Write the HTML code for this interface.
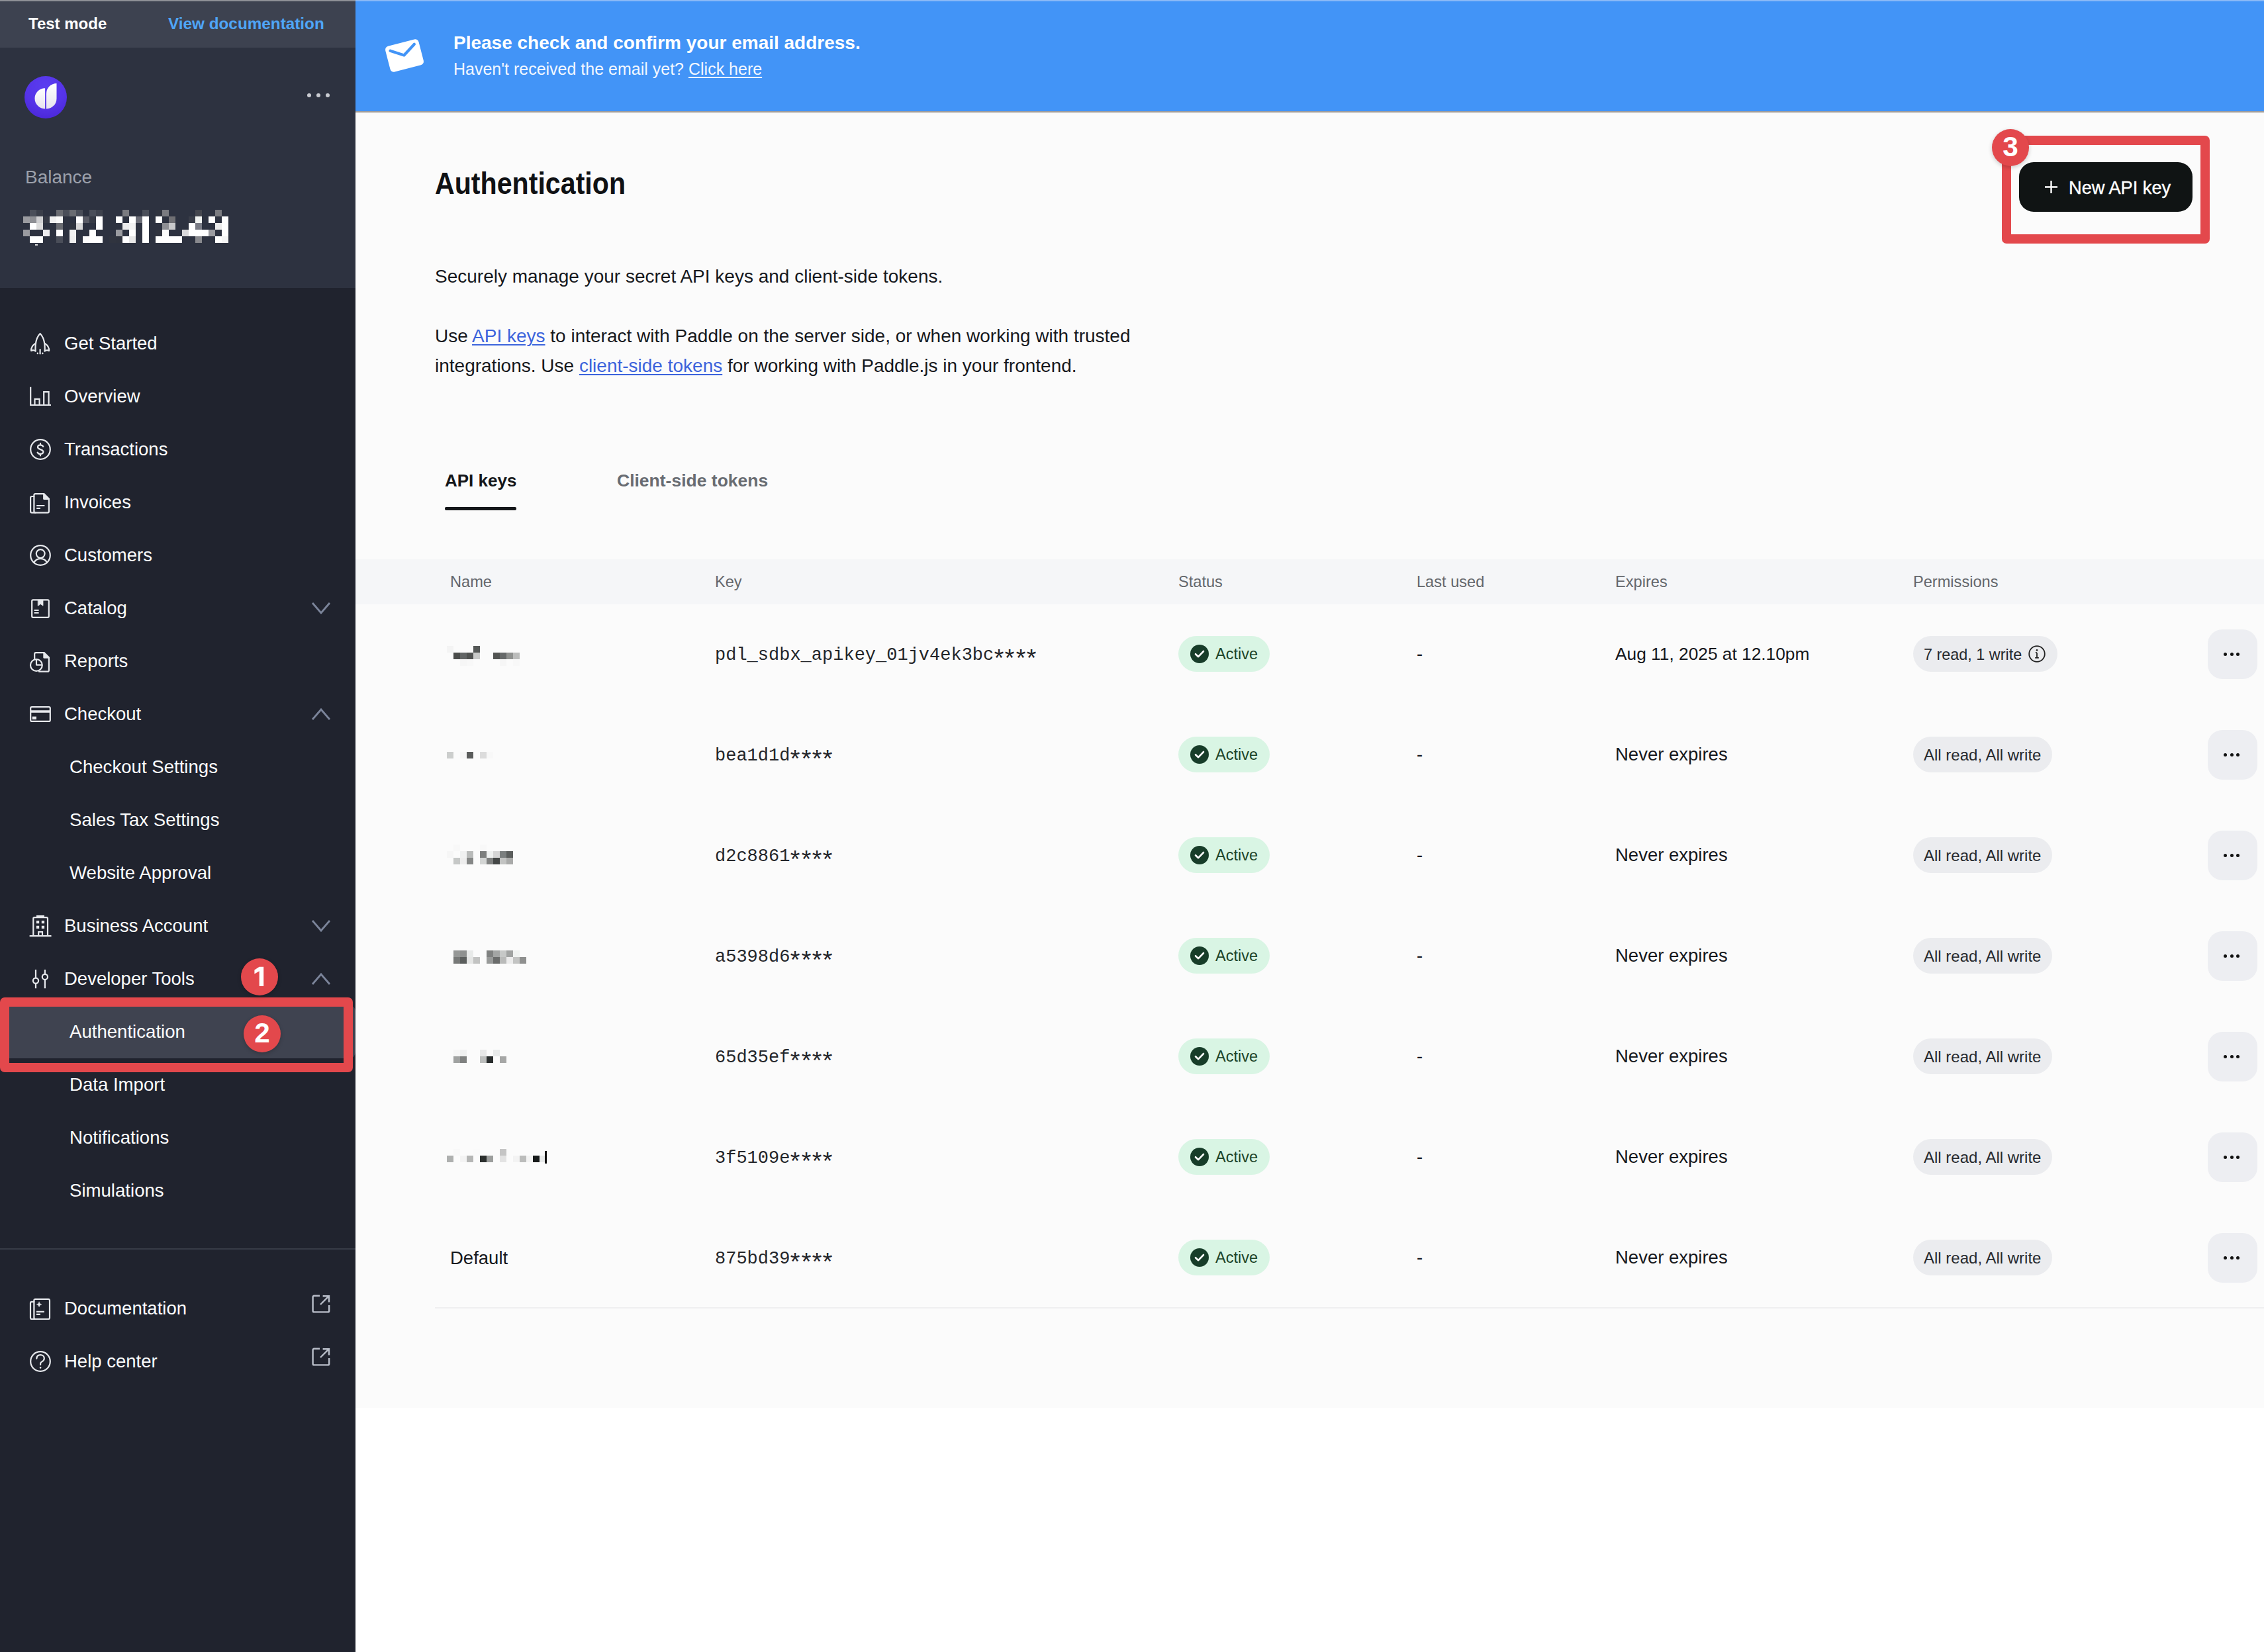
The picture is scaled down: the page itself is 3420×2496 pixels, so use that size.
<!DOCTYPE html>
<html><head><meta charset="utf-8">
<style>
*{box-sizing:border-box;margin:0;padding:0}
html,body{width:3420px;height:2496px;overflow:hidden;background:#fff}
body{position:relative;font-family:"Liberation Sans",sans-serif}
.a{position:absolute;white-space:nowrap}
#side{position:absolute;left:0;top:0;width:537px;height:2496px;background:#20232e}
#topbar{position:absolute;left:0;top:0;width:537px;height:72px;background:#3d4250}
#bal{position:absolute;left:0;top:72px;width:537px;height:363px;background:#2d3240}
.nav{position:absolute;left:0;width:537px;height:80px;line-height:80px;font-size:27.5px;color:#fbfcfd}
.nav.sel{background:#3f4350;border-radius:0 9px 9px 0}
.nav .t{position:absolute;left:97px;top:0}
.nav .st{position:absolute;left:105px;top:0;font-size:27.6px}
.nav svg.ic{position:absolute;left:45px;top:24px;width:32px;height:32px;overflow:visible}
.nav svg.ch{position:absolute;left:469px;top:28px;width:32px;height:24px}
.nav svg.ext{position:absolute;left:471px;top:19px;width:28px;height:28px}
#main{position:absolute;left:537px;top:0;width:2883px;height:2127px;background:#fbfbfb}
#banner{position:absolute;left:0;top:0;width:2883px;height:168px;background:#4294f7}
.lk{color:#3b63dc;text-decoration:underline;text-underline-offset:3px;text-decoration-thickness:2px}
.th{line-height:58px;font-size:23.6px;color:#64676c;top:850px}
.rt{line-height:80px;font-size:27.5px;color:#16181d}
.mono{font-family:"Liberation Mono",monospace;font-size:27px;line-height:80px;color:#24262a}
.badge{height:54px;border-radius:27px;background:#d9f5e4}
.perm{height:54px;border-radius:27px;background:#ebecef}
.dots{width:75px;height:75px;border-radius:22px;background:#edeef2}
.dots i{position:absolute;top:35px;width:5px;height:5px;border-radius:50%;background:#111}
.rbox{border:14px solid #e3484c;border-radius:7px}
.circ{width:56px;height:56px;border-radius:50%;background:#e3484c;color:#fff;font-weight:bold;font-size:42.3px;line-height:54px;text-align:center;box-shadow:0 2px 6px rgba(0,0,0,0.2)}
.ast{display:inline-block;width:16.2px;font-style:normal;text-align:center;transform:translateY(8.5px) scale(1.4,1.4)}

</style></head><body>
<div id="side">
<div id="topbar"><span class="a" style="left:43px;top:0;line-height:72px;font-size:24px;font-weight:bold;color:#fff">Test mode</span>
<span class="a" style="left:254px;top:0;line-height:72px;font-size:24.3px;font-weight:bold;color:#4fa5f7">View documentation</span></div>
<div class="a" style="left:0;top:0;width:537px;height:2px;background:#8e9096"></div>
<div id="bal">
</div>
<svg class="a" style="left:37px;top:115px" width="64" height="64" viewBox="0 0 64 64">
<defs><radialGradient id="lg" cx="0.5" cy="0.25" r="0.8"><stop offset="0" stop-color="#5a3df0"/><stop offset="0.6" stop-color="#5533e8"/><stop offset="1" stop-color="#4a26d8"/></radialGradient>
<linearGradient id="wg" x1="0" y1="0" x2="0" y2="1"><stop offset="0" stop-color="#ffffff"/><stop offset="1" stop-color="#e6e4ee"/></linearGradient></defs>
<circle cx="32" cy="32" r="32" fill="url(#lg)"/>
<path d="M31.1 18.2V49.4A15.6 15.6 0 0 1 31.1 18.2Z" fill="url(#wg)"/>
<path d="M33 49.4V26.4A15.5 15.5 0 0 1 48.5 10.9V33.9A15.5 15.5 0 0 1 33 49.4Z" fill="url(#wg)"/>
</svg>
<div class="a" style="left:464px;top:141px;width:6px;height:6px;border-radius:3px;background:#c9cbd1"></div>
<div class="a" style="left:478px;top:141px;width:6px;height:6px;border-radius:3px;background:#c9cbd1"></div>
<div class="a" style="left:492px;top:141px;width:6px;height:6px;border-radius:3px;background:#c9cbd1"></div>
<span class="a" style="left:38px;top:238px;line-height:60px;font-size:28px;color:#9ca1ac">Balance</span>
<svg class="a" style="left:35px;top:317px" width="310" height="55" shape-rendering="crispEdges"><rect x="10" y="0" width="10" height="10" fill="#4a4e59"/><rect x="20" y="0" width="10" height="10" fill="#3a3e49"/><rect x="50" y="0" width="10" height="10" fill="#6a6c72"/><rect x="60" y="0" width="10" height="10" fill="#4a4e59"/><rect x="70" y="0" width="10" height="10" fill="#6a6c72"/><rect x="80" y="0" width="10" height="10" fill="#4a4e59"/><rect x="100" y="0" width="10" height="10" fill="#4a4e59"/><rect x="110" y="0" width="10" height="10" fill="#3e424d"/><rect x="150" y="0" width="10" height="10" fill="#7a7b80"/><rect x="180" y="0" width="10" height="10" fill="#4a4e59"/><rect x="200" y="0" width="10" height="10" fill="#30343f"/><rect x="210" y="0" width="10" height="10" fill="#7a7b80"/><rect x="260" y="0" width="10" height="10" fill="#45474f"/><rect x="290" y="0" width="10" height="10" fill="#7a7b80"/><rect x="0" y="10" width="10" height="10" fill="#9a9ba0"/><rect x="10" y="10" width="10" height="10" fill="#8e8f94"/><rect x="20" y="10" width="10" height="10" fill="#d0d0d2"/><rect x="30" y="10" width="10" height="10" fill="#363a45"/><rect x="40" y="10" width="10" height="10" fill="#f0f0f0"/><rect x="50" y="10" width="10" height="10" fill="#fafafa"/><rect x="80" y="10" width="10" height="10" fill="#ffffff"/><rect x="90" y="10" width="10" height="10" fill="#5a5c66"/><rect x="100" y="10" width="10" height="10" fill="#363a45"/><rect x="110" y="10" width="10" height="10" fill="#ffffff"/><rect x="140" y="10" width="10" height="10" fill="#ffffff"/><rect x="160" y="10" width="10" height="10" fill="#ffffff"/><rect x="170" y="10" width="10" height="10" fill="#6a6c76"/><rect x="180" y="10" width="10" height="10" fill="#ffffff"/><rect x="200" y="10" width="10" height="10" fill="#ffffff"/><rect x="220" y="10" width="10" height="10" fill="#707074"/><rect x="250" y="10" width="10" height="10" fill="#3a3e49"/><rect x="260" y="10" width="10" height="10" fill="#f2f4f2"/><rect x="280" y="10" width="10" height="10" fill="#ffffff"/><rect x="300" y="10" width="10" height="10" fill="#ffffff"/><rect x="10" y="20" width="10" height="10" fill="#ffffff"/><rect x="20" y="20" width="10" height="10" fill="#dcdcdc"/><rect x="50" y="20" width="10" height="10" fill="#6a6c72"/><rect x="70" y="20" width="10" height="10" fill="#30343f"/><rect x="80" y="20" width="10" height="10" fill="#d8d8d8"/><rect x="110" y="20" width="10" height="10" fill="#ffffff"/><rect x="150" y="20" width="10" height="10" fill="#ebebeb"/><rect x="160" y="20" width="10" height="10" fill="#f2f2f2"/><rect x="180" y="20" width="10" height="10" fill="#ffffff"/><rect x="210" y="20" width="10" height="10" fill="#8e8f94"/><rect x="220" y="20" width="10" height="10" fill="#c8c8ca"/><rect x="250" y="20" width="10" height="10" fill="#ffffff"/><rect x="260" y="20" width="10" height="10" fill="#7a7c86"/><rect x="290" y="20" width="10" height="10" fill="#ebebeb"/><rect x="300" y="20" width="10" height="10" fill="#ffffff"/><rect x="0" y="30" width="10" height="10" fill="#9a9ba0"/><rect x="30" y="30" width="10" height="10" fill="#ececee"/><rect x="50" y="30" width="10" height="10" fill="#ffffff"/><rect x="70" y="30" width="10" height="10" fill="#f2f2f2"/><rect x="100" y="30" width="10" height="10" fill="#ffffff"/><rect x="140" y="30" width="10" height="10" fill="#9a9ba0"/><rect x="160" y="30" width="10" height="10" fill="#ffffff"/><rect x="180" y="30" width="10" height="10" fill="#ffffff"/><rect x="200" y="30" width="10" height="10" fill="#30343f"/><rect x="210" y="30" width="10" height="10" fill="#fcfcfc"/><rect x="240" y="30" width="10" height="10" fill="#d8d8da"/><rect x="250" y="30" width="10" height="10" fill="#ffffff"/><rect x="260" y="30" width="10" height="10" fill="#ffffff"/><rect x="270" y="30" width="10" height="10" fill="#ffffff"/><rect x="280" y="30" width="10" height="10" fill="#9a9ba0"/><rect x="300" y="30" width="10" height="10" fill="#ffffff"/><rect x="10" y="40" width="10" height="10" fill="#ffffff"/><rect x="20" y="40" width="10" height="10" fill="#ffffff"/><rect x="50" y="40" width="10" height="10" fill="#4a4e59"/><rect x="70" y="40" width="10" height="10" fill="#efefef"/><rect x="90" y="40" width="10" height="10" fill="#fcfcfc"/><rect x="100" y="40" width="10" height="10" fill="#ffffff"/><rect x="110" y="40" width="10" height="10" fill="#ffffff"/><rect x="130" y="40" width="10" height="10" fill="#30343f"/><rect x="140" y="40" width="10" height="10" fill="#2f333e"/><rect x="150" y="40" width="10" height="10" fill="#ffffff"/><rect x="160" y="40" width="10" height="10" fill="#e8e8e8"/><rect x="180" y="40" width="10" height="10" fill="#ffffff"/><rect x="200" y="40" width="10" height="10" fill="#ffffff"/><rect x="210" y="40" width="10" height="10" fill="#ffffff"/><rect x="220" y="40" width="10" height="10" fill="#ffffff"/><rect x="230" y="40" width="10" height="10" fill="#ffffff"/><rect x="260" y="40" width="10" height="10" fill="#88898e"/><rect x="290" y="40" width="10" height="10" fill="#ffffff"/><rect x="300" y="40" width="10" height="10" fill="#f5f5f5"/><rect x="18" y="52" width="4" height="2" fill="#ddd"/></svg>
<div class="nav" style="top:479px"><svg class="ic" viewBox="0 0 32 32" fill="none" stroke="#e6e8ec" stroke-width="2.2" stroke-linecap="round" stroke-linejoin="round"><path d="M8.6 27.4C7.8 14 10.6 6 15.6 1C20.6 6 23.4 14 22.6 27.4"/><path d="M8.4 15.8C4.2 18.6 1.8 22.8 2.1 27C4.4 25.6 6.6 25.8 8.6 27.4M22.8 15.8C27 18.6 29.4 22.8 29.1 27C26.8 25.6 24.6 25.8 22.6 27.4"/><path d="M11.8 30.6v0.6M15.6 25v6.4M19.4 30.6v0.6"/></svg><span class="t">Get Started</span></div><div class="nav" style="top:559px"><svg class="ic" viewBox="0 0 32 32" fill="none" stroke="#e6e8ec" stroke-width="2.2" stroke-linecap="round" stroke-linejoin="round"><path d="M1.2 1.8V29H32" stroke-linecap="butt" stroke-linejoin="miter"/><path d="M7.5 29V19.8H14.6V29M21.2 29V9.2H28.6V29" stroke-linejoin="miter"/></svg><span class="t">Overview</span></div><div class="nav" style="top:639px"><svg class="ic" viewBox="0 0 32 32" fill="none" stroke="#e6e8ec" stroke-width="2.2" stroke-linecap="round" stroke-linejoin="round"><circle cx="16" cy="16" r="14.8"/><path d="M20.2 11.6C19.4 10.2 18 9.4 16 9.4C13.6 9.4 12 10.7 12 12.6C12 17 20.4 15.2 20.4 19.6C20.4 21.6 18.6 22.9 16 22.9C13.8 22.9 12.4 22 11.6 20.6M16 6.8V9.4M16 22.9V25.4"/></svg><span class="t">Transactions</span></div><div class="nav" style="top:719px"><svg class="ic" viewBox="0 0 32 32" fill="none" stroke="#e6e8ec" stroke-width="2.2" stroke-linecap="round" stroke-linejoin="round"><path d="M6.4 7H3.2Q1.1 7 1.1 9.1V29.6Q1.1 31.7 3.2 31.7H8.6"/><path d="M6.4 29.6V5.2Q6.4 3.1 8.5 3.1H21.2L28.9 10.8V29.6Q28.9 31.7 26.8 31.7H8.5Q6.4 31.7 6.4 29.6Z"/><path d="M21.2 3.1L28.9 10.8H21.2Z" fill="#e6e8ec"/><path d="M10.2 21H22.4M10.2 25H16" stroke-linecap="butt"/></svg><span class="t">Invoices</span></div><div class="nav" style="top:799px"><svg class="ic" viewBox="0 0 32 32" fill="none" stroke="#e6e8ec" stroke-width="2.2" stroke-linecap="round" stroke-linejoin="round"><circle cx="16" cy="16" r="14.8"/><circle cx="16.2" cy="13.6" r="6.4"/><path d="M6.2 27C8.4 23.3 12 21.2 16.2 21.2C20.4 21.2 24 23.3 26.1 27"/></svg><span class="t">Customers</span></div><div class="nav" style="top:879px"><svg class="ic" viewBox="0 0 32 32" fill="none" stroke="#e6e8ec" stroke-width="2.2" stroke-linecap="round" stroke-linejoin="round"><rect x="3.2" y="3.3" width="25.6" height="26.6" rx="1.8"/><path d="M12.6 3.3H20V12.2L16.3 9.6L12.6 12.2Z" fill="#e6e8ec" stroke-width="0.8"/><path d="M6.6 19H13.6M6.6 23H13.6" stroke-linecap="butt"/></svg><span class="t">Catalog</span><svg class="ch" viewBox="0 0 32 24" fill="none" stroke="#7b849a" stroke-width="2.8"><path d="M3 4L16 19L29 4"/></svg></div><div class="nav" style="top:959px"><svg class="ic" viewBox="0 0 32 32" fill="none" stroke="#e6e8ec" stroke-width="2.2" stroke-linecap="round" stroke-linejoin="round"><path d="M7.2 12V5.1Q7.2 3.1 9.2 3.1H21.4L28.9 10.6V29.7Q28.9 31.7 26.9 31.7H14"/><path d="M21.4 3.1L28.9 10.6H21.4Z" fill="#e6e8ec"/><circle cx="9.9" cy="22" r="8.9" fill="#20232e"/><path d="M10 13.4V21.6H18.6" stroke-linecap="butt"/></svg><span class="t">Reports</span></div><div class="nav" style="top:1039px"><svg class="ic" viewBox="0 0 32 32" fill="none" stroke="#e6e8ec" stroke-width="2.2" stroke-linecap="round" stroke-linejoin="round"><rect x="1.2" y="5.1" width="29.6" height="21.8" rx="2"/><path d="M1.2 12H30.8" stroke-width="3.6" stroke-linecap="butt"/><rect x="3.7" y="19.6" width="6.3" height="4.4" fill="#e6e8ec" stroke="none"/></svg><span class="t">Checkout</span><svg class="ch" viewBox="0 0 32 24" fill="none" stroke="#7b849a" stroke-width="2.8"><path d="M3 20L16 5L29 20"/></svg></div><div class="nav" style="top:1119px"><span class="st">Checkout Settings</span></div><div class="nav" style="top:1199px"><span class="st">Sales Tax Settings</span></div><div class="nav" style="top:1279px"><span class="st">Website Approval</span></div><div class="nav" style="top:1359px"><svg class="ic" viewBox="0 0 32 32" fill="none" stroke="#e6e8ec" stroke-width="2.2" stroke-linecap="round" stroke-linejoin="round"><path d="M5.3 31V4.8Q5.3 3.1 7 3.1H25.3Q27 3.1 27 4.8V31"/><path d="M0.6 31.1H31.6" stroke-width="2.4"/><path d="M10 1.4H22" stroke-width="2.8" stroke-linecap="butt"/><path d="M9.9 7.9h4.3v4.3h-4.3zM17.8 7.9h4.3v4.3h-4.3zM9.9 15.7h4.3v4.3h-4.3zM17.8 15.7h4.3v4.3h-4.3z" fill="#e6e8ec" stroke="none"/><path d="M13.2 31V25H19V31" stroke-linejoin="miter"/></svg><span class="t">Business Account</span><svg class="ch" viewBox="0 0 32 24" fill="none" stroke="#7b849a" stroke-width="2.8"><path d="M3 4L16 19L29 4"/></svg></div><div class="nav" style="top:1439px"><svg class="ic" viewBox="0 0 32 32" fill="none" stroke="#e6e8ec" stroke-width="2.2" stroke-linecap="round" stroke-linejoin="round"><path d="M9 1.9V14.6M9 23V30.2M22.9 1.9V8.7M22.9 17.1V30.2" stroke-linecap="butt"/><circle cx="9" cy="18.8" r="4.1"/><circle cx="22.9" cy="12.9" r="4.1"/></svg><span class="t">Developer Tools</span><svg class="ch" viewBox="0 0 32 24" fill="none" stroke="#7b849a" stroke-width="2.8"><path d="M3 20L16 5L29 20"/></svg></div><div class="nav sel" style="top:1519px"><span class="st">Authentication</span></div><div class="nav" style="top:1599px"><span class="st">Data Import</span></div><div class="nav" style="top:1679px"><span class="st">Notifications</span></div><div class="nav" style="top:1759px"><span class="st">Simulations</span></div><div class="nav" style="top:1937px"><svg class="ic" viewBox="0 0 32 32" fill="none" stroke="#e6e8ec" stroke-width="2.2" stroke-linecap="round" stroke-linejoin="round"><path d="M6.4 5.8H3Q1 5.8 1 7.8V30Q1 32 3 32H8.4"/><path d="M6.4 30V3.9Q6.4 1.9 8.4 1.9H28Q30 1.9 30 3.9V30Q30 32 28 32H8.4Q6.4 32 6.4 30Z"/><path d="M14.1 6.2Q14.6 9.4 17.8 9.9Q14.6 10.4 14.1 13.6Q13.6 10.4 10.4 9.9Q13.6 9.4 14.1 6.2Z" fill="#e6e8ec" stroke-width="0.6"/><path d="M10 20.9H21.9M10 24.8H16" stroke-linecap="butt"/></svg><span class="t">Documentation</span><svg class="ext" viewBox="0 0 28 28" fill="none" stroke="#b9bec9" stroke-width="2.4"><path d="M12 1.8H3.6Q1.6 1.8 1.6 3.8V24.4Q1.6 26.4 3.6 26.4H24.2Q26.2 26.4 26.2 24.4V16"/><path d="M13 15L25.6 2.4M16.6 2.2H26V11.6"/></svg></div><div class="nav" style="top:2017px"><svg class="ic" viewBox="0 0 32 32" fill="none" stroke="#e6e8ec" stroke-width="2.2" stroke-linecap="round" stroke-linejoin="round"><circle cx="16" cy="16" r="14.8"/><path d="M10.3 11.6C10.6 8.2 13 6.2 16.2 6.2C19.4 6.2 21.8 8.4 21.8 11.4C21.8 14.6 19.4 15.6 17.6 16.8C16.6 17.5 16.1 18.3 16.1 19.6V21"/><circle cx="16.1" cy="25.4" r="1.3" fill="#e6e8ec" stroke="none"/></svg><span class="t">Help center</span><svg class="ext" viewBox="0 0 28 28" fill="none" stroke="#b9bec9" stroke-width="2.4"><path d="M12 1.8H3.6Q1.6 1.8 1.6 3.8V24.4Q1.6 26.4 3.6 26.4H24.2Q26.2 26.4 26.2 24.4V16"/><path d="M13 15L25.6 2.4M16.6 2.2H26V11.6"/></svg></div>
<div class="a" style="left:0;top:1886px;width:537px;height:2px;background:#373b47"></div>
</div>
<div id="main">
<div id="banner">
<div class="a" style="left:0;top:0;width:2883px;height:2px;background:#8ab9f7"></div>
<svg class="a" style="left:34px;top:44px" width="80" height="80" viewBox="0 0 80 80"><g transform="translate(40,40) rotate(-14.5)"><rect x="-26" y="-20" width="52" height="40" rx="5.5" fill="#fff"/><path d="M-19 -12.4L-0.5 -0.6L18.7 -13" fill="none" stroke="#4294f7" stroke-width="4.2" stroke-linecap="round" stroke-linejoin="round"/></g></svg>
<span class="a" style="left:148px;top:45px;line-height:40px;font-size:28px;font-weight:bold;color:#fff">Please check and confirm your email address.</span>
<span class="a" style="left:148px;top:84px;line-height:40px;font-size:25px;color:#f2f7ff">Haven't received the email yet? <u style="text-underline-offset:3px;text-decoration-thickness:1.5px">Click here</u></span>
</div>
<div class="a" style="left:0;top:168px;width:2883px;height:2px;background:#a39d97"></div>
<span class="a" style="left:120px;top:247px;line-height:60px;font-size:46.5px;font-weight:bold;color:#0f1114;transform:scaleX(0.885);transform-origin:0 0">Authentication</span>
<div class="a" style="left:120px;top:395px;line-height:45px;font-size:28px;color:#16181d">Securely manage your secret API keys and client-side tokens.</div>
<div class="a" style="left:120px;top:485px;line-height:45px;font-size:28px;color:#16181d">Use <a class="lk">API keys</a> to interact with Paddle on the server side, or when working with trusted<br>integrations. Use <a class="lk">client-side tokens</a> for working with Paddle.js in your frontend.</div>
<span class="a" style="left:135px;top:706px;line-height:40px;font-size:26px;font-weight:bold;color:#15171a">API keys</span>
<div class="a" style="left:135px;top:766px;width:108px;height:5px;border-radius:2px;background:#15171a"></div>
<span class="a" style="left:395px;top:706px;line-height:40px;font-size:26.5px;font-weight:bold;color:#686c72">Client-side tokens</span>
<div class="a" style="left:0;top:845px;width:2883px;height:68px;background:#f5f6f8"></div>
<span class="a th" style="left:143px">Name</span>
<span class="a th" style="left:543px">Key</span>
<span class="a th" style="left:1243px">Status</span>
<span class="a th" style="left:1603px">Last used</span>
<span class="a th" style="left:1903px">Expires</span>
<span class="a th" style="left:2353px">Permissions</span>
<svg class="a" style="left:0;top:0" width="400" height="2000" shape-rendering="crispEdges"><rect x="138" y="976" width="10" height="10" fill="#f4f4f4"/><rect x="178" y="976" width="10" height="10" fill="#555857"/><rect x="148" y="986" width="10" height="10" fill="#4a4c4b"/><rect x="158" y="986" width="10" height="10" fill="#626565"/><rect x="168" y="986" width="10" height="10" fill="#505251"/><rect x="178" y="986" width="10" height="10" fill="#c8c9c8"/><rect x="208" y="986" width="10" height="10" fill="#525453"/><rect x="218" y="986" width="10" height="10" fill="#666969"/><rect x="228" y="986" width="10" height="10" fill="#8f918f"/><rect x="238" y="986" width="10" height="10" fill="#bbbcbb"/><rect x="158" y="996" width="10" height="10" fill="#f6f6f6"/><rect x="168" y="996" width="10" height="10" fill="#f8f8f8"/><rect x="218" y="996" width="10" height="10" fill="#f6f6f6"/><rect x="238" y="996" width="10" height="10" fill="#f8f8f8"/><rect x="138" y="1136" width="10" height="10" fill="#cccecd"/><rect x="158" y="1136" width="10" height="10" fill="#f6f6f6"/><rect x="168" y="1136" width="10" height="10" fill="#5a5c5b"/><rect x="188" y="1136" width="10" height="10" fill="#dcdcdc"/><rect x="198" y="1136" width="10" height="10" fill="#f8f8f8"/><rect x="148" y="1276" width="10" height="10" fill="#f8f8f8"/><rect x="188" y="1276" width="10" height="10" fill="#f8f8f8"/><rect x="138" y="1286" width="10" height="10" fill="#f6f6f6"/><rect x="158" y="1286" width="10" height="10" fill="#f0f1f1"/><rect x="168" y="1286" width="10" height="10" fill="#b9bbba"/><rect x="188" y="1286" width="10" height="10" fill="#7d7f7e"/><rect x="198" y="1286" width="10" height="10" fill="#f0f2f1"/><rect x="208" y="1286" width="10" height="10" fill="#d6d6d6"/><rect x="218" y="1286" width="10" height="10" fill="#7b7f7f"/><rect x="228" y="1286" width="10" height="10" fill="#5b5e5d"/><rect x="148" y="1296" width="10" height="10" fill="#c6c8c7"/><rect x="158" y="1296" width="10" height="10" fill="#ededed"/><rect x="168" y="1296" width="10" height="10" fill="#858786"/><rect x="188" y="1296" width="10" height="10" fill="#d3d5d4"/><rect x="198" y="1296" width="10" height="10" fill="#7f8180"/><rect x="208" y="1296" width="10" height="10" fill="#444746"/><rect x="218" y="1296" width="10" height="10" fill="#c2c3c2"/><rect x="228" y="1296" width="10" height="10" fill="#a9aaa9"/><rect x="148" y="1436" width="10" height="10" fill="#969897"/><rect x="158" y="1436" width="10" height="10" fill="#8e908f"/><rect x="168" y="1436" width="10" height="10" fill="#e8eae9"/><rect x="198" y="1436" width="10" height="10" fill="#7f8180"/><rect x="208" y="1436" width="10" height="10" fill="#a3a5a4"/><rect x="218" y="1436" width="10" height="10" fill="#c6c8c7"/><rect x="228" y="1436" width="10" height="10" fill="#a1a3a2"/><rect x="238" y="1436" width="10" height="10" fill="#f0f2f1"/><rect x="148" y="1446" width="10" height="10" fill="#777978"/><rect x="158" y="1446" width="10" height="10" fill="#5b5e5d"/><rect x="168" y="1446" width="10" height="10" fill="#e5e6e5"/><rect x="178" y="1446" width="10" height="10" fill="#c2c3c2"/><rect x="198" y="1446" width="10" height="10" fill="#989a99"/><rect x="208" y="1446" width="10" height="10" fill="#6a6c6b"/><rect x="218" y="1446" width="10" height="10" fill="#b9bab9"/><rect x="228" y="1446" width="10" height="10" fill="#ececec"/><rect x="238" y="1446" width="10" height="10" fill="#c3c4c3"/><rect x="248" y="1446" width="10" height="10" fill="#8f908f"/><rect x="148" y="1586" width="10" height="10" fill="#f6f6f6"/><rect x="158" y="1586" width="10" height="10" fill="#eff0f0"/><rect x="188" y="1586" width="10" height="10" fill="#e7e8e8"/><rect x="208" y="1586" width="10" height="10" fill="#e8eaea"/><rect x="148" y="1596" width="10" height="10" fill="#a0a2a1"/><rect x="158" y="1596" width="10" height="10" fill="#7f8180"/><rect x="188" y="1596" width="10" height="10" fill="#bcbebd"/><rect x="198" y="1596" width="10" height="10" fill="#282c2c"/><rect x="218" y="1596" width="10" height="10" fill="#a6a7a6"/><rect x="148" y="1736" width="10" height="10" fill="#f8f8f8"/><rect x="178" y="1736" width="10" height="10" fill="#fafafa"/><rect x="218" y="1736" width="10" height="10" fill="#c5c5c5"/><rect x="138" y="1746" width="10" height="10" fill="#aeb0af"/><rect x="158" y="1746" width="10" height="10" fill="#f3f3f3"/><rect x="168" y="1746" width="10" height="10" fill="#b5b6b5"/><rect x="188" y="1746" width="10" height="10" fill="#2b2f2e"/><rect x="198" y="1746" width="10" height="10" fill="#9c9e9d"/><rect x="218" y="1746" width="10" height="10" fill="#e3e3e3"/><rect x="238" y="1746" width="10" height="10" fill="#f3f3f3"/><rect x="248" y="1746" width="10" height="10" fill="#bbbcbb"/><rect x="258" y="1746" width="10" height="10" fill="#f3f3f3"/><rect x="268" y="1746" width="10" height="10" fill="#161a1a"/><rect x="278" y="1746" width="10" height="10" fill="#e8eaea"/><rect x="286" y="1739" width="3" height="19" fill="#111"/></svg>
<span class="a mono" style="left:543px;top:950px">pdl_sdbx_apikey_01jv4ek3bc<i class=ast>*</i><i class=ast>*</i><i class=ast>*</i><i class=ast>*</i></span><div class="a badge" style="left:1243px;top:961px;width:138px"><svg class="a" style="left:18px;top:13px" width="28" height="28" viewBox="0 0 28 28"><circle cx="14" cy="14" r="14" fill="#173d29"/><path d="M8 14.2L12.2 18.2L20 10" fill="none" stroke="#fff" stroke-width="2.6" stroke-linecap="round" stroke-linejoin="round"/></svg><span class="a" style="left:56px;top:0;line-height:54px;font-size:23.5px;color:#1c4429">Active</span></div><span class="a rt" style="left:1603px;top:948px">-</span><span class="a rt" style="left:1903px;top:948px;font-size:26.3px">Aug 11, 2025 at 12.10pm</span><div class="a perm" style="left:2353px;top:961px;width:218px"><span class="a" style="left:16px;top:1px;line-height:54px;font-size:23.4px;color:#26292e">7 read, 1 write</span><svg class="a" style="left:173.6px;top:14px" width="26" height="26" viewBox="0 0 26 26" fill="none" stroke="#222" stroke-width="1.8"><circle cx="13" cy="13" r="11.8"/><path d="M13 11.2V18.8M10.8 11.2H13M10.2 18.8H15.8" stroke-width="1.8"/><circle cx="13" cy="7.4" r="1.3" fill="#222" stroke="none"/></svg></div><div class="a dots" style="left:2798px;top:951px"><i style="left:24px"></i><i style="left:33.5px"></i><i style="left:43px"></i></div><span class="a mono" style="left:543px;top:1102px">bea1d1d<i class=ast>*</i><i class=ast>*</i><i class=ast>*</i><i class=ast>*</i></span><div class="a badge" style="left:1243px;top:1113px;width:138px"><svg class="a" style="left:18px;top:13px" width="28" height="28" viewBox="0 0 28 28"><circle cx="14" cy="14" r="14" fill="#173d29"/><path d="M8 14.2L12.2 18.2L20 10" fill="none" stroke="#fff" stroke-width="2.6" stroke-linecap="round" stroke-linejoin="round"/></svg><span class="a" style="left:56px;top:0;line-height:54px;font-size:23.5px;color:#1c4429">Active</span></div><span class="a rt" style="left:1603px;top:1100px">-</span><span class="a rt" style="left:1903px;top:1100px;font-size:27.5px">Never expires</span><div class="a perm" style="left:2353px;top:1113px;width:210px"><span class="a" style="left:16px;top:1px;line-height:54px;font-size:24px;color:#26292e">All read, All write</span></div><div class="a dots" style="left:2798px;top:1103px"><i style="left:24px"></i><i style="left:33.5px"></i><i style="left:43px"></i></div><span class="a mono" style="left:543px;top:1254px">d2c8861<i class=ast>*</i><i class=ast>*</i><i class=ast>*</i><i class=ast>*</i></span><div class="a badge" style="left:1243px;top:1265px;width:138px"><svg class="a" style="left:18px;top:13px" width="28" height="28" viewBox="0 0 28 28"><circle cx="14" cy="14" r="14" fill="#173d29"/><path d="M8 14.2L12.2 18.2L20 10" fill="none" stroke="#fff" stroke-width="2.6" stroke-linecap="round" stroke-linejoin="round"/></svg><span class="a" style="left:56px;top:0;line-height:54px;font-size:23.5px;color:#1c4429">Active</span></div><span class="a rt" style="left:1603px;top:1252px">-</span><span class="a rt" style="left:1903px;top:1252px;font-size:27.5px">Never expires</span><div class="a perm" style="left:2353px;top:1265px;width:210px"><span class="a" style="left:16px;top:1px;line-height:54px;font-size:24px;color:#26292e">All read, All write</span></div><div class="a dots" style="left:2798px;top:1255px"><i style="left:24px"></i><i style="left:33.5px"></i><i style="left:43px"></i></div><span class="a mono" style="left:543px;top:1406px">a5398d6<i class=ast>*</i><i class=ast>*</i><i class=ast>*</i><i class=ast>*</i></span><div class="a badge" style="left:1243px;top:1417px;width:138px"><svg class="a" style="left:18px;top:13px" width="28" height="28" viewBox="0 0 28 28"><circle cx="14" cy="14" r="14" fill="#173d29"/><path d="M8 14.2L12.2 18.2L20 10" fill="none" stroke="#fff" stroke-width="2.6" stroke-linecap="round" stroke-linejoin="round"/></svg><span class="a" style="left:56px;top:0;line-height:54px;font-size:23.5px;color:#1c4429">Active</span></div><span class="a rt" style="left:1603px;top:1404px">-</span><span class="a rt" style="left:1903px;top:1404px;font-size:27.5px">Never expires</span><div class="a perm" style="left:2353px;top:1417px;width:210px"><span class="a" style="left:16px;top:1px;line-height:54px;font-size:24px;color:#26292e">All read, All write</span></div><div class="a dots" style="left:2798px;top:1407px"><i style="left:24px"></i><i style="left:33.5px"></i><i style="left:43px"></i></div><span class="a mono" style="left:543px;top:1558px">65d35ef<i class=ast>*</i><i class=ast>*</i><i class=ast>*</i><i class=ast>*</i></span><div class="a badge" style="left:1243px;top:1569px;width:138px"><svg class="a" style="left:18px;top:13px" width="28" height="28" viewBox="0 0 28 28"><circle cx="14" cy="14" r="14" fill="#173d29"/><path d="M8 14.2L12.2 18.2L20 10" fill="none" stroke="#fff" stroke-width="2.6" stroke-linecap="round" stroke-linejoin="round"/></svg><span class="a" style="left:56px;top:0;line-height:54px;font-size:23.5px;color:#1c4429">Active</span></div><span class="a rt" style="left:1603px;top:1556px">-</span><span class="a rt" style="left:1903px;top:1556px;font-size:27.5px">Never expires</span><div class="a perm" style="left:2353px;top:1569px;width:210px"><span class="a" style="left:16px;top:1px;line-height:54px;font-size:24px;color:#26292e">All read, All write</span></div><div class="a dots" style="left:2798px;top:1559px"><i style="left:24px"></i><i style="left:33.5px"></i><i style="left:43px"></i></div><span class="a mono" style="left:543px;top:1710px">3f5109e<i class=ast>*</i><i class=ast>*</i><i class=ast>*</i><i class=ast>*</i></span><div class="a badge" style="left:1243px;top:1721px;width:138px"><svg class="a" style="left:18px;top:13px" width="28" height="28" viewBox="0 0 28 28"><circle cx="14" cy="14" r="14" fill="#173d29"/><path d="M8 14.2L12.2 18.2L20 10" fill="none" stroke="#fff" stroke-width="2.6" stroke-linecap="round" stroke-linejoin="round"/></svg><span class="a" style="left:56px;top:0;line-height:54px;font-size:23.5px;color:#1c4429">Active</span></div><span class="a rt" style="left:1603px;top:1708px">-</span><span class="a rt" style="left:1903px;top:1708px;font-size:27.5px">Never expires</span><div class="a perm" style="left:2353px;top:1721px;width:210px"><span class="a" style="left:16px;top:1px;line-height:54px;font-size:24px;color:#26292e">All read, All write</span></div><div class="a dots" style="left:2798px;top:1711px"><i style="left:24px"></i><i style="left:33.5px"></i><i style="left:43px"></i></div><span class="a rt" style="left:143px;top:1861px">Default</span><span class="a mono" style="left:543px;top:1862px">875bd39<i class=ast>*</i><i class=ast>*</i><i class=ast>*</i><i class=ast>*</i></span><div class="a badge" style="left:1243px;top:1873px;width:138px"><svg class="a" style="left:18px;top:13px" width="28" height="28" viewBox="0 0 28 28"><circle cx="14" cy="14" r="14" fill="#173d29"/><path d="M8 14.2L12.2 18.2L20 10" fill="none" stroke="#fff" stroke-width="2.6" stroke-linecap="round" stroke-linejoin="round"/></svg><span class="a" style="left:56px;top:0;line-height:54px;font-size:23.5px;color:#1c4429">Active</span></div><span class="a rt" style="left:1603px;top:1860px">-</span><span class="a rt" style="left:1903px;top:1860px;font-size:27.5px">Never expires</span><div class="a perm" style="left:2353px;top:1873px;width:210px"><span class="a" style="left:16px;top:1px;line-height:54px;font-size:24px;color:#26292e">All read, All write</span></div><div class="a dots" style="left:2798px;top:1863px"><i style="left:24px"></i><i style="left:33.5px"></i><i style="left:43px"></i></div>
<div class="a" style="left:120px;top:1975px;width:2800px;height:2px;background:#efeff0"></div>
<div class="a" style="left:2513px;top:245px;width:262px;height:75px;border-radius:22px;background:#101414">
<svg class="a" style="left:38px;top:27px" width="21" height="21" viewBox="0 0 21 21"><path d="M10.5 1V20M1 10.5H20" stroke="#fff" stroke-width="2.4"/></svg>
<span class="a" style="left:75px;top:1px;line-height:75px;font-size:27.2px;color:#fff;-webkit-text-stroke:0.4px #fff">New API key</span></div>
</div>
<div class="a rbox" style="left:0;top:1507px;width:533px;height:113px"></div>
<div class="a rbox" style="left:3024px;top:205px;width:314px;height:163px"></div>
<div class="a circ" style="left:364px;top:1448px"><svg class="a" style="left:0;top:0" width="56" height="56"><path d="M27.7 12.8H34.2V42H27.7V19.3L20.4 23.6V17.6Z" fill="#fff"/></svg></div><div class="a circ" style="left:368px;top:1534px">2</div><div class="a circ" style="left:3009px;top:195px">3</div>
</body></html>
